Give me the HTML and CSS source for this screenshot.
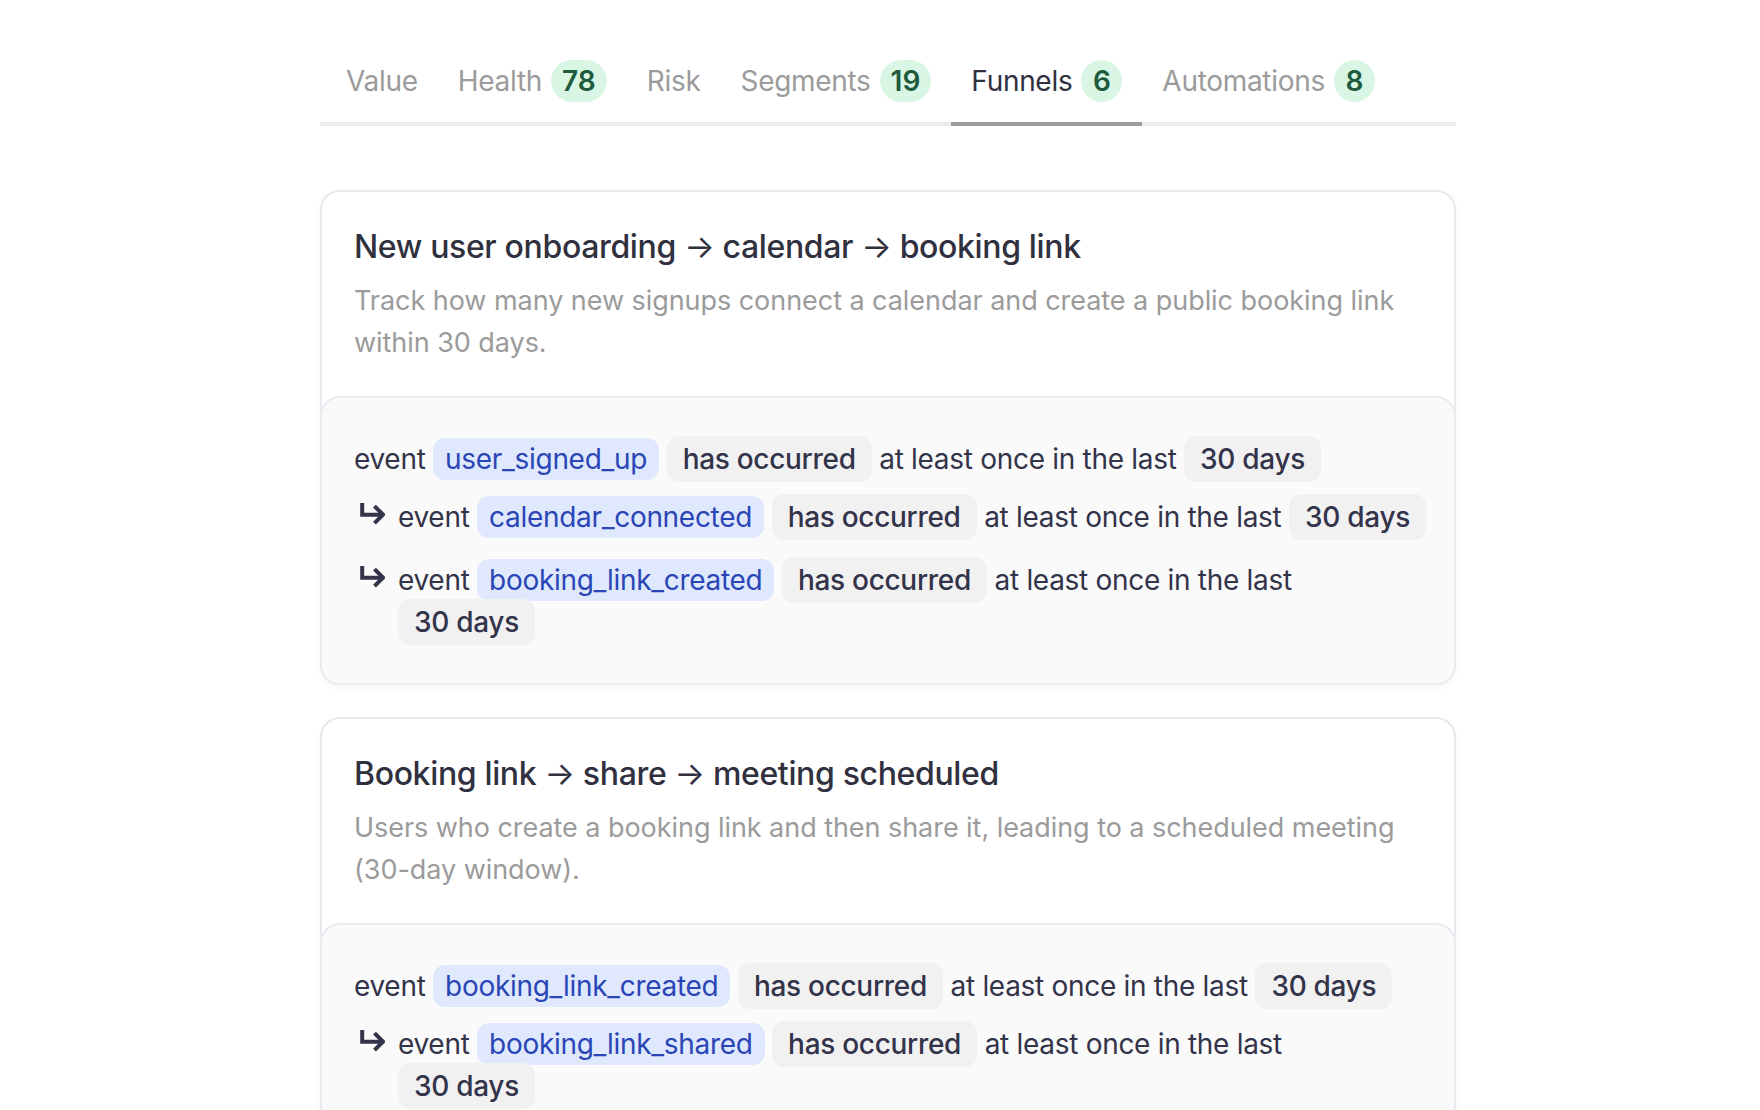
FILE: index.html
```html
<!DOCTYPE html>
<html lang="en">
<head>
<meta charset="utf-8">
<title>Funnels</title>
<link rel="stylesheet" href="styles.css">
</head>
<body>
<div class="page">
  <nav class="tabs">
    <div class="tab">Value</div>
    <div class="tab">Health <span class="badge">78</span></div>
    <div class="tab">Risk</div>
    <div class="tab">Segments <span class="badge">19</span></div>
    <div class="tab active">Funnels <span class="badge">6</span></div>
    <div class="tab">Automations <span class="badge">8</span></div>
  </nav>

  <section class="card">
    <div class="card-head">
      <h2 class="card-title">New user onboarding <span class="arrow">→</span> calendar <span class="arrow">→</span> booking link</h2>
      <p class="card-desc">Track how many new signups connect a calendar and create a public booking link within 30 days.</p>
    </div>
    <div class="steps">
      <div class="step first">
        <div class="step-text">event <span class="ev">user_signed_up</span> <span class="op">has occurred</span> at least once in the last <span class="op">30 days</span></div>
      </div>
      <div class="step second">
        <svg class="then" viewBox="0 0 25 22" width="25" height="22"><path d="M2.2 0V11.7H22.5M14.5 3.2L23 11.7L14.5 20.2"/></svg>
        <div class="step-text nowrap">event <span class="ev">calendar_connected</span> <span class="op">has occurred</span> at least once in the last <span class="op">30 days</span></div>
      </div>
      <div class="step third">
        <svg class="then" viewBox="0 0 25 22" width="25" height="22"><path d="M2.2 0V11.7H22.5M14.5 3.2L23 11.7L14.5 20.2"/></svg>
        <div class="step-text">event <span class="ev">booking_link_created</span> <span class="op">has occurred</span> at least once in the last<br><span class="op">30 days</span></div>
      </div>
    </div>
  </section>

  <section class="card">
    <div class="card-head">
      <h2 class="card-title">Booking link <span class="arrow">→</span> share <span class="arrow">→</span> meeting scheduled</h2>
      <p class="card-desc">Users who create a booking link and then share it, leading to a scheduled meeting (30-day window).</p>
    </div>
    <div class="steps">
      <div class="step first">
        <div class="step-text">event <span class="ev">booking_link_created</span> <span class="op">has occurred</span> at least once in the last <span class="op">30 days</span></div>
      </div>
      <div class="step second">
        <svg class="then" viewBox="0 0 25 22" width="25" height="22"><path d="M2.2 0V11.7H22.5M14.5 3.2L23 11.7L14.5 20.2"/></svg>
        <div class="step-text">event <span class="ev">booking_link_shared</span> <span class="op">has occurred</span> at least once in the last<br><span class="op">30 days</span></div>
      </div>
      <div class="step third">
        <svg class="then" viewBox="0 0 25 22" width="25" height="22"><path d="M2.2 0V11.7H22.5M14.5 3.2L23 11.7L14.5 20.2"/></svg>
        <div class="step-text">event <span class="ev">meeting_scheduled</span> <span class="op">has occurred</span> at least once in the last <span class="op">30 days</span></div>
      </div>
    </div>
  </section>
</div>
</body>
</html>
```

FILE: styles.css
```css
* { box-sizing: border-box; }

html, body {
  margin: 0;
  padding: 0;
  background: #ffffff;
}

body {
  font-family: Inter, "Noto Sans", "Liberation Sans", sans-serif;
  color: #33334a;
  font-size: 28px;
  line-height: 42px;
  letter-spacing: -0.3px;
}

.page {
  width: 1136px;
  margin-left: 320px;
  padding-top: 60px;
}

/* Tabs */
.tabs {
  display: flex;
  padding-left: 6px;
  border-bottom: 4px solid #ececf0;
}

.tab {
  display: flex;
  align-items: center;
  padding: 0 20px 20px;
  margin-bottom: -4px;
  border-bottom: 4px solid transparent;
  color: #9b9b9b;
  font-size: 28px;
  line-height: 42px;
  white-space: nowrap;
}

.tab.active {
  color: #30303f;
  border-bottom-color: #9d9d9d;
}

.badge {
  display: inline-flex;
  align-items: center;
  justify-content: center;
  min-width: 41px;
  height: 42px;
  padding: 0 11px;
  margin-left: 9px;
  border-radius: 21px;
  background: #d9f6e5;
  color: #1f5a3d;
  font-weight: 600;
  letter-spacing: 0;
}

/* Cards */
.card {
  margin-top: 64px;
  border: 2px solid #e8e8ee;
  border-radius: 20px;
  background: #ffffff;
  box-shadow: 0 3px 8px rgba(0, 0, 0, 0.035);
}

.card + .card {
  margin-top: 32px;
}

.card-head {
  padding: 32px 32px 32px;
}

.card-title {
  margin: 0;
  font-size: 32px;
  line-height: 46px;
  font-weight: 500;
  color: #30303f;
  letter-spacing: -0.35px;
}

.arrow {
  font-weight: 400;
}

.card-desc {
  margin: 10px 0 0;
  font-size: 27px;
  line-height: 42px;
  color: #9b9b9b;
  letter-spacing: -0.05px;
}

.steps {
  margin: 0 -2px -2px;
  padding: 40px 32px 40px;
  border: 2px solid #ececf0;
  border-radius: 20px;
  background: #fafafa;
}

.step {
  display: flex;
  align-items: flex-start;
}

.step.second { margin-top: 16px; }
.step.third { margin-top: 21px; }

.step-text {
  flex: 1;
  min-width: 0;
}

.nowrap { white-space: nowrap; }

.then {
  flex: none;
  margin: 7px 13px 0 6px;
  fill: none;
  stroke: #33334a;
  stroke-width: 4;
}

.ev {
  padding: 4px 12px;
  border-radius: 12px;
  background: #dfe8fc;
  color: #2a46b6;
}

.op {
  padding: 6px 16px;
  border-radius: 12px;
  background: #f1f1f2;
  color: #33334a;
  font-weight: 500;
}
```
